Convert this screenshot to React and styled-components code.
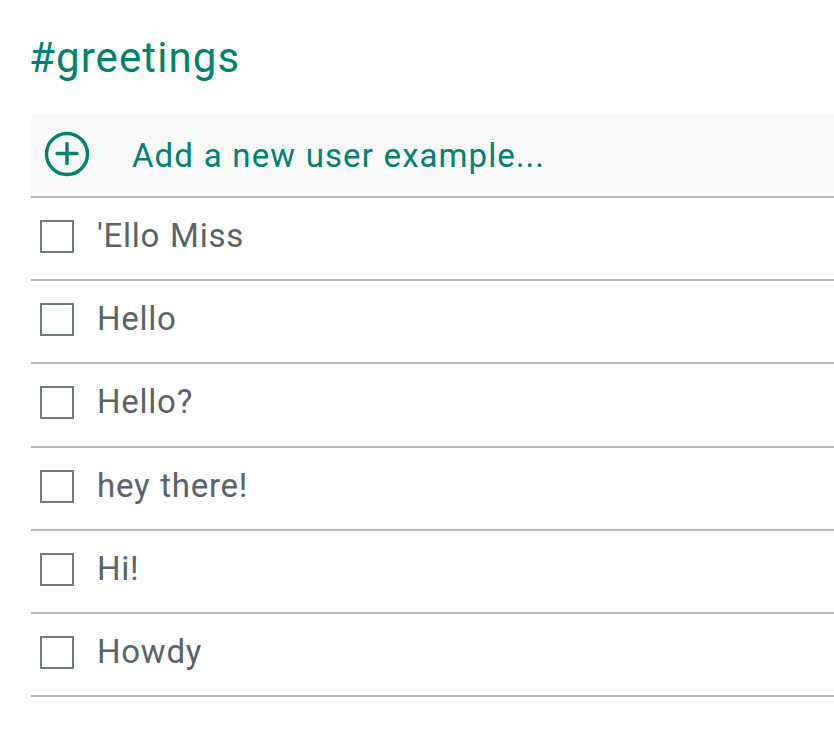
import React from 'react';
import styled, { createGlobalStyle } from 'styled-components';

const Global = createGlobalStyle`
html, body {
  margin:0;
  padding:0;
  background:#fefefe;
  overflow:hidden;
}
`

const Page = styled.div`
width:834px;
height:730px;
box-sizing:border-box;
padding:35px 0 0 31px;
font-family:Roboto, "Liberation Sans", sans-serif;
`

const Title = styled.h1`
margin:0 0 34px -2px;
height:45px;
line-height:45px;
font-size:42px;
font-weight:400;
letter-spacing:1.1px;
color:#00826c;
`

const AddRow = styled.div`
display:flex;
align-items:center;
height:84px;
box-sizing:border-box;
padding-left:13px;
background:#f9f9f9;
border-bottom:2px solid #b0bab9;
`

const AddLabel = styled.span`
margin-left:42px;
font-size:33px;
letter-spacing:1.05px;
word-spacing:.5px;
color:#00826c;
`

const Row = styled.div`
display:flex;
align-items:center;
height:83.2px;
box-sizing:border-box;
padding-left:9px;
border-bottom:2px solid #b0bab9;
`

const Box = styled.span`
width:34px;
height:33px;
box-sizing:border-box;
flex:none;
margin-top:-4px;
background:#fff;
border:2px solid #6f7c7c;
`

const Label = styled.span`
margin-left:23px;
margin-top:-6px;
font-size:33px;
letter-spacing:.75px;
word-spacing:1px;
color:#5a6468;
`

const PlusSvg = styled.svg`
flex:none;
margin-bottom:2px;
`

const PlusIcon = () => (
  <PlusSvg width="46" height="46" viewBox="0 0 46 46" fill="none" stroke="#00826c" strokeWidth="3.4" strokeLinecap="round">
    <circle cx="23" cy="23" r="20.5" />
    <path d="M23 12.5v20M13 22.5h20" />
  </PlusSvg>
)

const examples = ["'Ello Miss", 'Hello', 'Hello?', 'hey there!', 'Hi!', 'Howdy']

export default function App() {
  return <Page>
    <Global />
    <Title>#greetings</Title>
    <AddRow>
      <PlusIcon />
      <AddLabel>Add a new user example...</AddLabel>
    </AddRow>
    {examples.map(o =>
      <Row key={o}>
        <Box />
        <Label>{o}</Label>
      </Row>)}
  </Page>
}
